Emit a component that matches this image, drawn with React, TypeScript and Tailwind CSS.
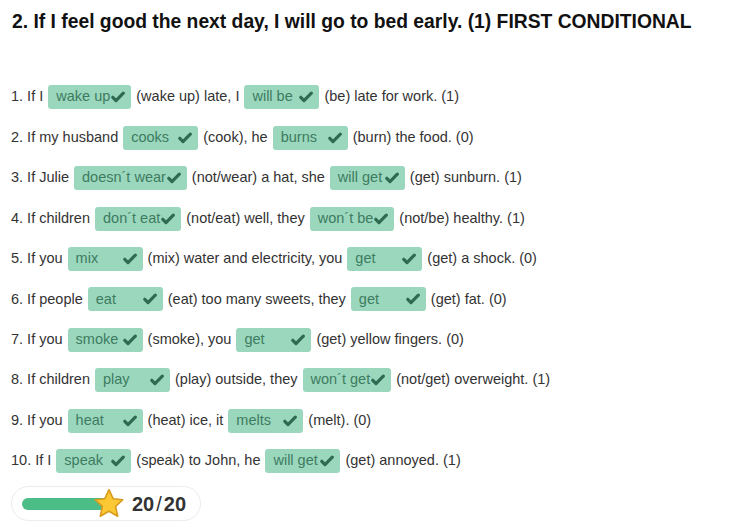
import React from "react";

type Part = string | { answer: string };

const rows: Part[][] = [
  ["1. If I", { answer: "wake up" }, "(wake up) late, I", { answer: "will be" }, "(be) late for work. (1)"],
  ["2. If my husband", { answer: "cooks" }, "(cook), he", { answer: "burns" }, "(burn) the food. (0)"],
  ["3. If Julie", { answer: "doesn´t wear" }, "(not/wear) a hat, she", { answer: "will get" }, "(get) sunburn. (1)"],
  ["4. If children", { answer: "don´t eat" }, "(not/eat) well, they", { answer: "won´t be" }, "(not/be) healthy. (1)"],
  ["5. If you", { answer: "mix" }, "(mix) water and electricity, you", { answer: "get" }, "(get) a shock. (0)"],
  ["6. If people", { answer: "eat" }, "(eat) too many sweets, they", { answer: "get" }, "(get) fat. (0)"],
  ["7. If you", { answer: "smoke" }, "(smoke), you", { answer: "get" }, "(get) yellow fingers. (0)"],
  ["8. If children", { answer: "play" }, "(play) outside, they", { answer: "won´t get" }, "(not/get) overweight. (1)"],
  ["9. If you", { answer: "heat" }, "(heat) ice, it", { answer: "melts" }, "(melt). (0)"],
  ["10. If I", { answer: "speak" }, "(speak) to John, he", { answer: "will get" }, "(get) annoyed. (1)"],
];

function Check() {
  return (
    <svg width="14" height="12" viewBox="0 0 14 12" className="shrink-0">
      <path d="M1.8 6.3 L5 9.6 L12.3 2.2" fill="none" stroke="#2f6b50" strokeWidth="3.2" strokeLinecap="round" strokeLinejoin="round" />
    </svg>
  );
}

function Answer({ text }: { text: string }) {
  return (
    <span className="mx-[5px] inline-flex h-[24px] min-w-[75px] items-center justify-between gap-[1px] rounded-[3px] bg-[#9bd7bd] pl-[8px] pr-[6px] text-[#3d7c60]">
      <span className="whitespace-pre">{text}</span>
      <Check />
    </span>
  );
}

function Star() {
  return (
    <svg width="34" height="34" viewBox="0 0 32 32" className="absolute left-[70px] top-[0px]">
      <path
        d="M16 2.5 L19.9 11 L29 12 L22.2 18.3 L24.2 27.5 L16 22.8 L7.8 27.5 L9.8 18.3 L3 12 L12.1 11 Z"
        fill="#fcc934"
        stroke="#d99a1e"
        strokeWidth="1.5"
        strokeLinejoin="round"
      />
    </svg>
  );
}

export default function App() {
  return (
    <div className="h-[526px] w-[732px] bg-white font-['Liberation_Sans',Arial,sans-serif] text-[#333]">
      <h1 className="pl-[12px] pt-[10px] text-[19.3px] font-bold leading-[23px] text-[#111]">
        2. If I feel good the next day, I will go to bed early. (1) FIRST CONDITIONAL
      </h1>
      <div className="mt-[44px] flex flex-col pl-[11px] text-[14.5px]">
        {rows.map((parts, i) => (
          <div key={i} className="flex h-[40.45px] items-center">
            {parts.map((p, j) =>
              typeof p === "string" ? (
                <span key={j} className="whitespace-pre">{p}</span>
              ) : (
                <Answer key={j} text={p.answer} />
              )
            )}
          </div>
        ))}
      </div>
      <div className="ml-[11px] mt-[5px] flex h-[35px] w-[190px] items-center rounded-full border border-[#ececec] pl-[10px]">
        <div className="relative h-[34px] w-[110px]">
          <div className="absolute left-0 top-[11px] h-[12px] w-[90px] rounded-full bg-[#4dbd88]" />
          <Star />
        </div>
        <span className="text-[20px] font-bold text-[#333]">
          20<span className="mx-[2px] font-normal">/</span>20
        </span>
      </div>
    </div>
  );
}
